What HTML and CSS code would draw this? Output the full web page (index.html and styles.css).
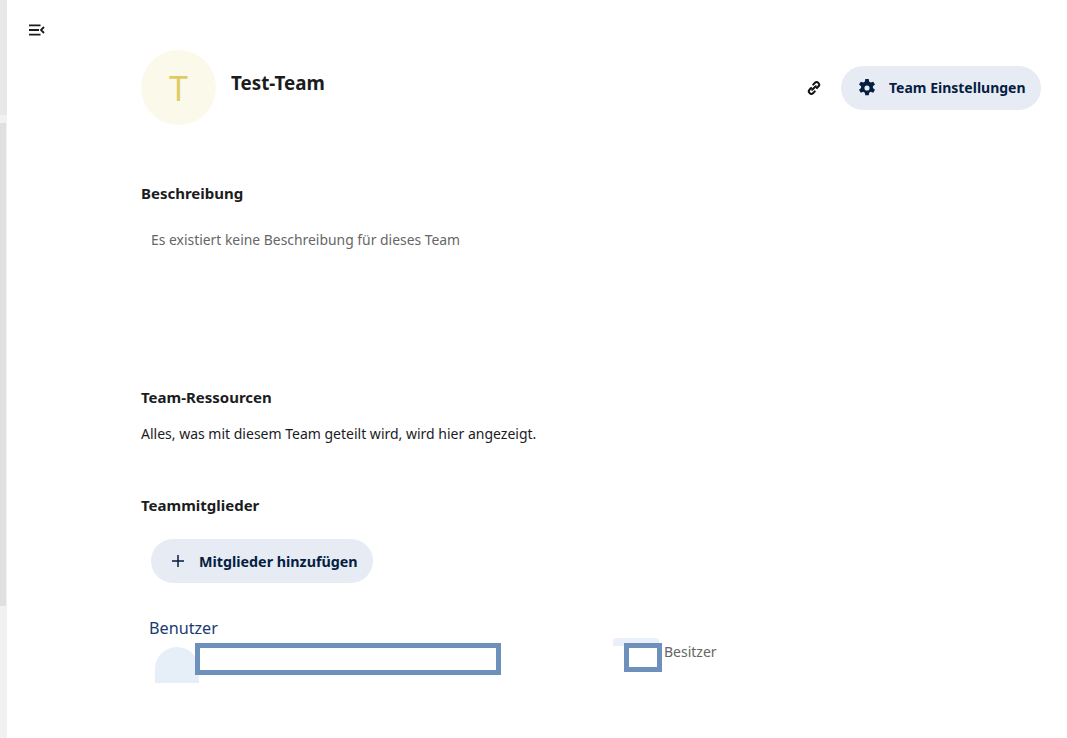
FILE: index.html
```html
<!DOCTYPE html>
<html lang="de">
<head>
<meta charset="utf-8">
<title>Test-Team</title>
<link rel="stylesheet" href="styles.css">
</head>
<body>
<div class="rail"><div class="rail-top"></div><div class="rail-thumb"></div><div class="rail-rest"></div></div>
<div class="page">
  <button class="menu-toggle" aria-label="Menü">
    <svg width="16" height="12" viewBox="0 0 16 12" fill="none" stroke="#1a1c1e" stroke-width="1.8"><path d="M0 1.4h11.5M0 6h10M0 10.6h11.5"/><path d="M15 3 12 6l3 3"/></svg>
  </button>
  <main class="content">
    <header class="team-head">
      <div class="avatar">T</div>
      <h1 class="team-name">Test-Team</h1>
      <div class="actions">
        <button class="icon-btn" aria-label="Link">
          <svg width="16" height="16" viewBox="0 0 16 16" fill="none" stroke="#111" stroke-width="2" stroke-linecap="round"><path d="M7.2 4.6 9 2.8a2.3 2.3 0 0 1 3.2 0l.3.3a2.3 2.3 0 0 1 0 3.2L10.9 8"/><path d="M8.8 11.4 7 13.2a2.3 2.3 0 0 1-3.2 0l-.3-.3a2.3 2.3 0 0 1 0-3.2L5.1 8"/><path d="M6.2 9.8 9.8 6.2"/></svg>
        </button>
        <button class="pill pill-settings">
          <svg width="18" height="18" viewBox="1.5 1.5 21 21" fill="#041e42"><path fill-rule="evenodd" d="M14 1.5h-4l-.6 3.1c-.6.2-1.2.6-1.7 1l-3-1-2 3.4 2.4 2a8 8 0 0 0 0 2l-2.4 2 2 3.4 3-1c.5.4 1.1.8 1.7 1l.6 3.1h4l.6-3.1c.6-.2 1.2-.6 1.7-1l3 1 2-3.4-2.4-2a8 8 0 0 0 0-2l2.4-2-2-3.4-3 1c-.5-.4-1.1-.8-1.7-1zM12 9a3 3 0 1 1 0 6 3 3 0 0 1 0-6z"/></svg>
          <span class="pill-label-raised">Team Einstellungen</span>
        </button>
      </div>
    </header>

    <section class="desc-section">
      <h2 class="section-title">Beschreibung</h2>
      <p class="muted-text">Es existiert keine Beschreibung für dieses Team</p>
    </section>

    <section class="res-section">
      <h2 class="section-title">Team-Ressourcen</h2>
      <p class="body-text">Alles, was mit diesem Team geteilt wird, wird hier angezeigt.</p>
    </section>

    <section class="members-section">
      <h2 class="section-title">Teammitglieder</h2>
      <button class="pill pill-add">
        <svg width="14" height="14" viewBox="0 0 14 14" stroke="#041e42" stroke-width="1.5"><path d="M7 1v12M1 7h12"/></svg>
        <span>Mitglieder hinzufügen</span>
      </button>
      <div class="table-label">Benutzer</div>
      <div class="member-row">
        <div class="member-avatar"></div>
        <div class="redact redact-name"></div>
        <div class="role-wrap">
          <div class="role-smear"></div>
          <div class="redact redact-role"></div>
        </div>
        <span class="role-text">Besitzer</span>
      </div>
    </section>
  </main>
</div>
</body>
</html>
```
FILE: styles.css
```css
* { box-sizing: border-box; }
html, body { height: 100%; }
body {
  margin: 0;
  display: flex;
  overflow: hidden;
  background: #fff;
  color: #1a1c1e;
  font-family: "Noto Sans", "Open Sans", sans-serif;
}
button { font-family: inherit; border: 0; background: none; padding: 0; }

.rail { width: 7px; flex: none; display: flex; flex-direction: column; background: #f1f1f1; }
.rail-top { height: 115px; background: #e8e8e8; }
.rail-thumb { width: 6px; height: 483px; margin-top: 8px; background: #e0e0e0; }
.rail-rest { flex: 1; }

.page { flex: 1; position: relative; }
.menu-toggle { position: absolute; left: 23px; top: 24px; width: 16px; height: 12px; display: flex; transform: translateX(-1px); }

.content { padding: 50px 26px 0 134px; }

.team-head { display: flex; align-items: flex-start; height: 75px; }
.avatar {
  width: 75px; height: 75px; border-radius: 50%;
  background: #fbf9ea; color: #dfcb66;
  display: flex; align-items: center; justify-content: center;
  font-size: 34px; flex: none;
}
.team-name { margin: 21px 0 0 15px; font-size: 18.8px; line-height: 24px; font-weight: 700; }
.actions { margin-left: auto; margin-top: 16px; display: flex; align-items: center; gap: 19px; }
.icon-btn { width: 16px; height: 16px; display: flex; }

.pill {
  height: 44px; border-radius: 22px; background: #e7ebf3; color: #041e42;
  display: inline-flex; align-items: center; font-weight: 700;
}
.pill-settings { width: 200px; padding-left: 17px; gap: 13px; font-size: 14px; }
.pill-label-raised { margin-bottom: 2px; }
.pill-add { width: 222px; margin: 24px 0 0 10px; padding-left: 20px; gap: 14px; font-size: 14.3px; }

.section-title { margin: 0; font-size: 15px; line-height: 20px; font-weight: 700; }
.desc-section { margin-top: 58px; }
.muted-text { margin: 27px 0 0 10px; font-size: 13.9px; line-height: 20px; color: #666; }
.res-section { margin-top: 137px; }
.body-text { margin: 17px 0 0; font-size: 14px; line-height: 20px; }
.members-section { margin-top: 51px; }

.table-label { margin: 34px 0 0 8px; font-size: 16.2px; line-height: 22px; color: #1a3a70; }
.member-row { display: flex; align-items: flex-start; height: 44px; margin-left: 14px; }
.member-avatar { width: 44px; height: 36px; margin-top: 8px; background: #e6eef8; border-radius: 22px 22px 0 0; flex: none; }
.redact { border: 5px solid #6e90bd; background: #fff; }
.redact-name { width: 306px; height: 32px; margin-left: -4px; margin-top: 4px; position: relative; }
.role-wrap { position: relative; width: 49px; margin-left: 112px; }
.role-smear { position: absolute; left: 0; top: -1px; width: 46px; height: 8px; background: #e9f0f9; border-radius: 4px 4px 0 0; }
.redact-role { position: absolute; left: 11px; top: 4px; width: 38px; height: 29px; }
.role-text { margin-left: 2px; font-size: 14px; line-height: 20px; color: #666; margin-top: 3px; }
```
